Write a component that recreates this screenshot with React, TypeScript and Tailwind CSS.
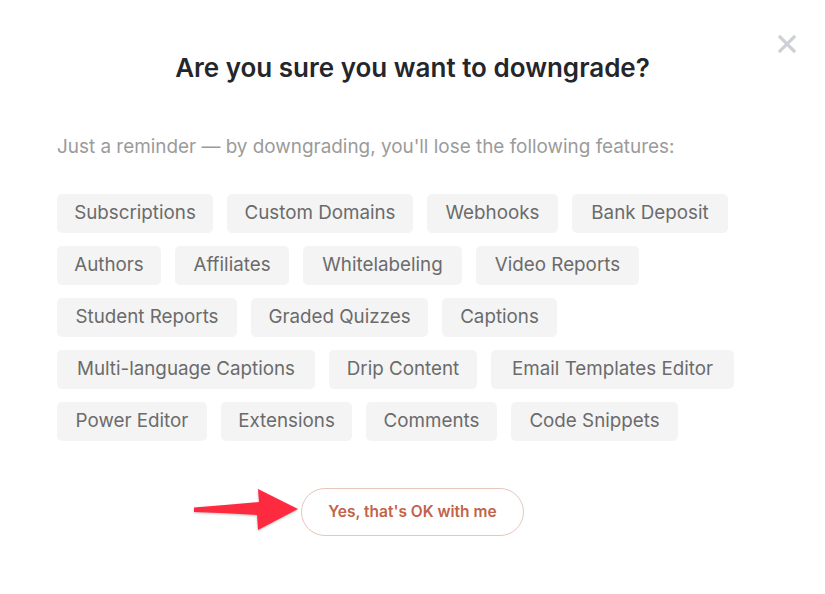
const rows: { label: string; w: string }[][] = [
  [
    { label: "Subscriptions", w: "w-[156px]" },
    { label: "Custom Domains", w: "w-[186px]" },
    { label: "Webhooks", w: "w-[131px]" },
    { label: "Bank Deposit", w: "w-[156px]" },
  ],
  [
    { label: "Authors", w: "w-[104px]" },
    { label: "Affiliates", w: "w-[114px]" },
    { label: "Whitelabeling", w: "w-[159px]" },
    { label: "Video Reports", w: "w-[163px]" },
  ],
  [
    { label: "Student Reports", w: "w-[180px]" },
    { label: "Graded Quizzes", w: "w-[177px]" },
    { label: "Captions", w: "w-[115px]" },
  ],
  [
    { label: "Multi-language Captions", w: "w-[258px]" },
    { label: "Drip Content", w: "w-[148px]" },
    { label: "Email Templates Editor", w: "w-[243px]" },
  ],
  [
    { label: "Power Editor", w: "w-[150px]" },
    { label: "Extensions", w: "w-[131px]" },
    { label: "Comments", w: "w-[131px]" },
    { label: "Code Snippets", w: "w-[167px]" },
  ],
];

function Arrow() {
  return (
    <svg
      width="112"
      height="50"
      viewBox="0 0 112 50"
      className="absolute left-[-110px] top-[-3px] drop-shadow-[0_1px_1px_rgba(0,0,0,0.25)]"
    >
      <path
        d="M3,22.5 Q35,20 68,17 L67,4 L107,24 L67,45 L66,30 Q35,28 3,27 Z"
        fill="#fe2b40"
      />
    </svg>
  );
}

export default function App() {
  return (
    <div className="relative min-h-[594px] w-[825px] bg-white font-['Inter',sans-serif]">
      <button className="absolute left-[778px] top-[35px] h-[18px] w-[18px]">
        <svg width="18" height="18" viewBox="0 0 18 18">
          <path
            d="M2,2 L16,16 M16,2 L2,16"
            stroke="#cdd1d7"
            strokeWidth="3.2"
            strokeLinecap="square"
          />
        </svg>
      </button>

      <div className="px-[57px] pt-[52px]">
        <h1 className="text-center text-[26px] font-semibold leading-[32px] text-[#24262b]">
          Are you sure you want to downgrade?
        </h1>
        <p className="mt-[51px] text-[18.9px] leading-[24px] text-[#9b9b9b]">
          Just a reminder — by downgrading, you'll lose the following features:
        </p>

        <div className="mt-[35px] flex flex-col gap-[13px]">
          {rows.map((row, i) => (
            <div key={i} className="flex gap-[14px]">
              {row.map((f) => (
                <span
                  key={f.label}
                  className={`${f.w} flex h-[39px] items-center justify-center rounded-[5px] bg-[#f4f4f4] text-[18.8px] text-[#6b6b6b]`}
                >
                  {f.label}
                </span>
              ))}
            </div>
          ))}
        </div>

        <div className="mt-[47px] flex justify-center">
          <div className="relative">
            <Arrow />
            <button className="h-[48px] w-[223px] rounded-full border border-[#e6c7b9] bg-white text-[15.5px] font-semibold text-[#c2634a]">
              Yes, that's OK with me
            </button>
          </div>
        </div>
      </div>
    </div>
  );
}
